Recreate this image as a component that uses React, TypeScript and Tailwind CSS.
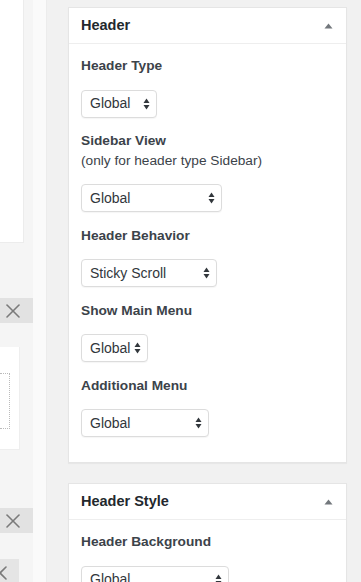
import { X } from "lucide-react";

const font = { fontFamily: '"Liberation Sans", Arial, sans-serif' };

function Arrows() {
  return (
    <svg width="7" height="12" viewBox="0 0 7 12" className="shrink-0">
      <path d="M3.5 0.5 L6.5 5 L0.5 5 Z" fill="#32373c" />
      <path d="M3.5 11.5 L6.5 7 L0.5 7 Z" fill="#32373c" />
    </svg>
  );
}

function Select({ value, width }: { value: string; width: string }) {
  return (
    <div
      className={`${width} h-[28px] flex items-center justify-between pl-[8px] pr-[6px] bg-white border border-[#dcdcdc] rounded-[4px] shadow-[0_1px_1px_rgba(0,0,0,0.04)] text-[14px] text-[#32373c]`}
    >
      <span>{value}</span>
      <Arrows />
    </div>
  );
}

function Field({ label, hint, value, width }: any) {
  return (
    <div className="flex flex-col">
      <div className="text-[13.7px] leading-[19.5px] font-bold text-[#3c434a]">{label}</div>
      {hint && <div className="text-[13.7px] leading-[19.5px] text-[#3c434a]">{hint}</div>}
      <div className="mt-[14px]">
        <Select value={value} width={width} />
      </div>
    </div>
  );
}

function Panel({ title, children }: any) {
  return (
    <div className="w-[279px] bg-white border border-[#e5e5e5] shadow-[0_1px_1px_rgba(0,0,0,0.04)]">
      <div className="h-[36px] flex items-center justify-between pl-[12px] pr-[13px] border-b border-[#eeeeee]">
        <span className="text-[14.5px] font-bold text-[#23282d]">{title}</span>
        <svg width="9" height="6" viewBox="0 0 9 6">
          <path d="M4.5 0.5 L8.5 5.5 L0.5 5.5 Z" fill="#72777c" />
        </svg>
      </div>
      {children}
    </div>
  );
}

export default function App() {
  return (
    <div className="w-[361px] h-[582px] overflow-hidden flex bg-[#f1f1f1]" style={font}>
      {/* LEFT EDGE (cut off content) */}
      <div className="w-[33px] shrink-0 bg-[#f5f5f5] flex flex-col">
        <div className="h-[243px] w-[24px] bg-white border-r border-b border-[#ececec]" />
        <div className="h-[55px]" />
        <div className="h-[25px] bg-[#e2e2e2] flex items-center pl-[1px]">
          <X size={24} strokeWidth={1.6} className="text-[#7a7a7a]" />
        </div>
        <div className="h-[24px]" />
        <div className="h-[103px] w-[20px] bg-white border-r border-b border-[#eeeeee] pt-[26px]">
          <div className="h-[56px] w-[10px] border-t border-r border-b border-dotted border-[#bbbbbb]" />
        </div>
        <div className="h-[58px]" />
        <div className="h-[25px] bg-[#e2e2e2] flex items-center pl-[1px]">
          <X size={24} strokeWidth={1.6} className="text-[#7a7a7a]" />
        </div>
        <div className="h-[26px]" />
        <div className="flex-1 w-[19px] bg-[#e5e5e5] flex items-start pt-[2px] overflow-hidden">
          <X size={24} strokeWidth={1.6} className="text-[#7a7a7a] -ml-[12px] shrink-0" />
        </div>
      </div>
      <div className="w-[14px] shrink-0 bg-[#fafafa] border-r border-[#ececec]" />

      {/* SIDEBAR PANELS */}
      <div className="flex-1 pl-[21px] pt-[7px] flex flex-col gap-[20px]">
        <Panel title="Header">
          <div className="pl-[12px] pt-[12px] pb-[25px] flex flex-col gap-[13.5px]">
            <Field label="Header Type" value="Global" width="w-[76px]" />
            <Field
              label="Sidebar View"
              hint="(only for header type Sidebar)"
              value="Global"
              width="w-[141px]"
            />
            <Field label="Header Behavior" value="Sticky Scroll" width="w-[136px]" />
            <Field label="Show Main Menu" value="Global" width="w-[67px]" />
            <Field label="Additional Menu" value="Global" width="w-[128px]" />
          </div>
        </Panel>

        <Panel title="Header Style">
          <div className="pl-[12px] pt-[12px] pb-[25px] flex flex-col gap-[13.5px]">
            <Field label="Header Background" value="Global" width="w-[148px]" />
          </div>
        </Panel>
      </div>
    </div>
  );
}
